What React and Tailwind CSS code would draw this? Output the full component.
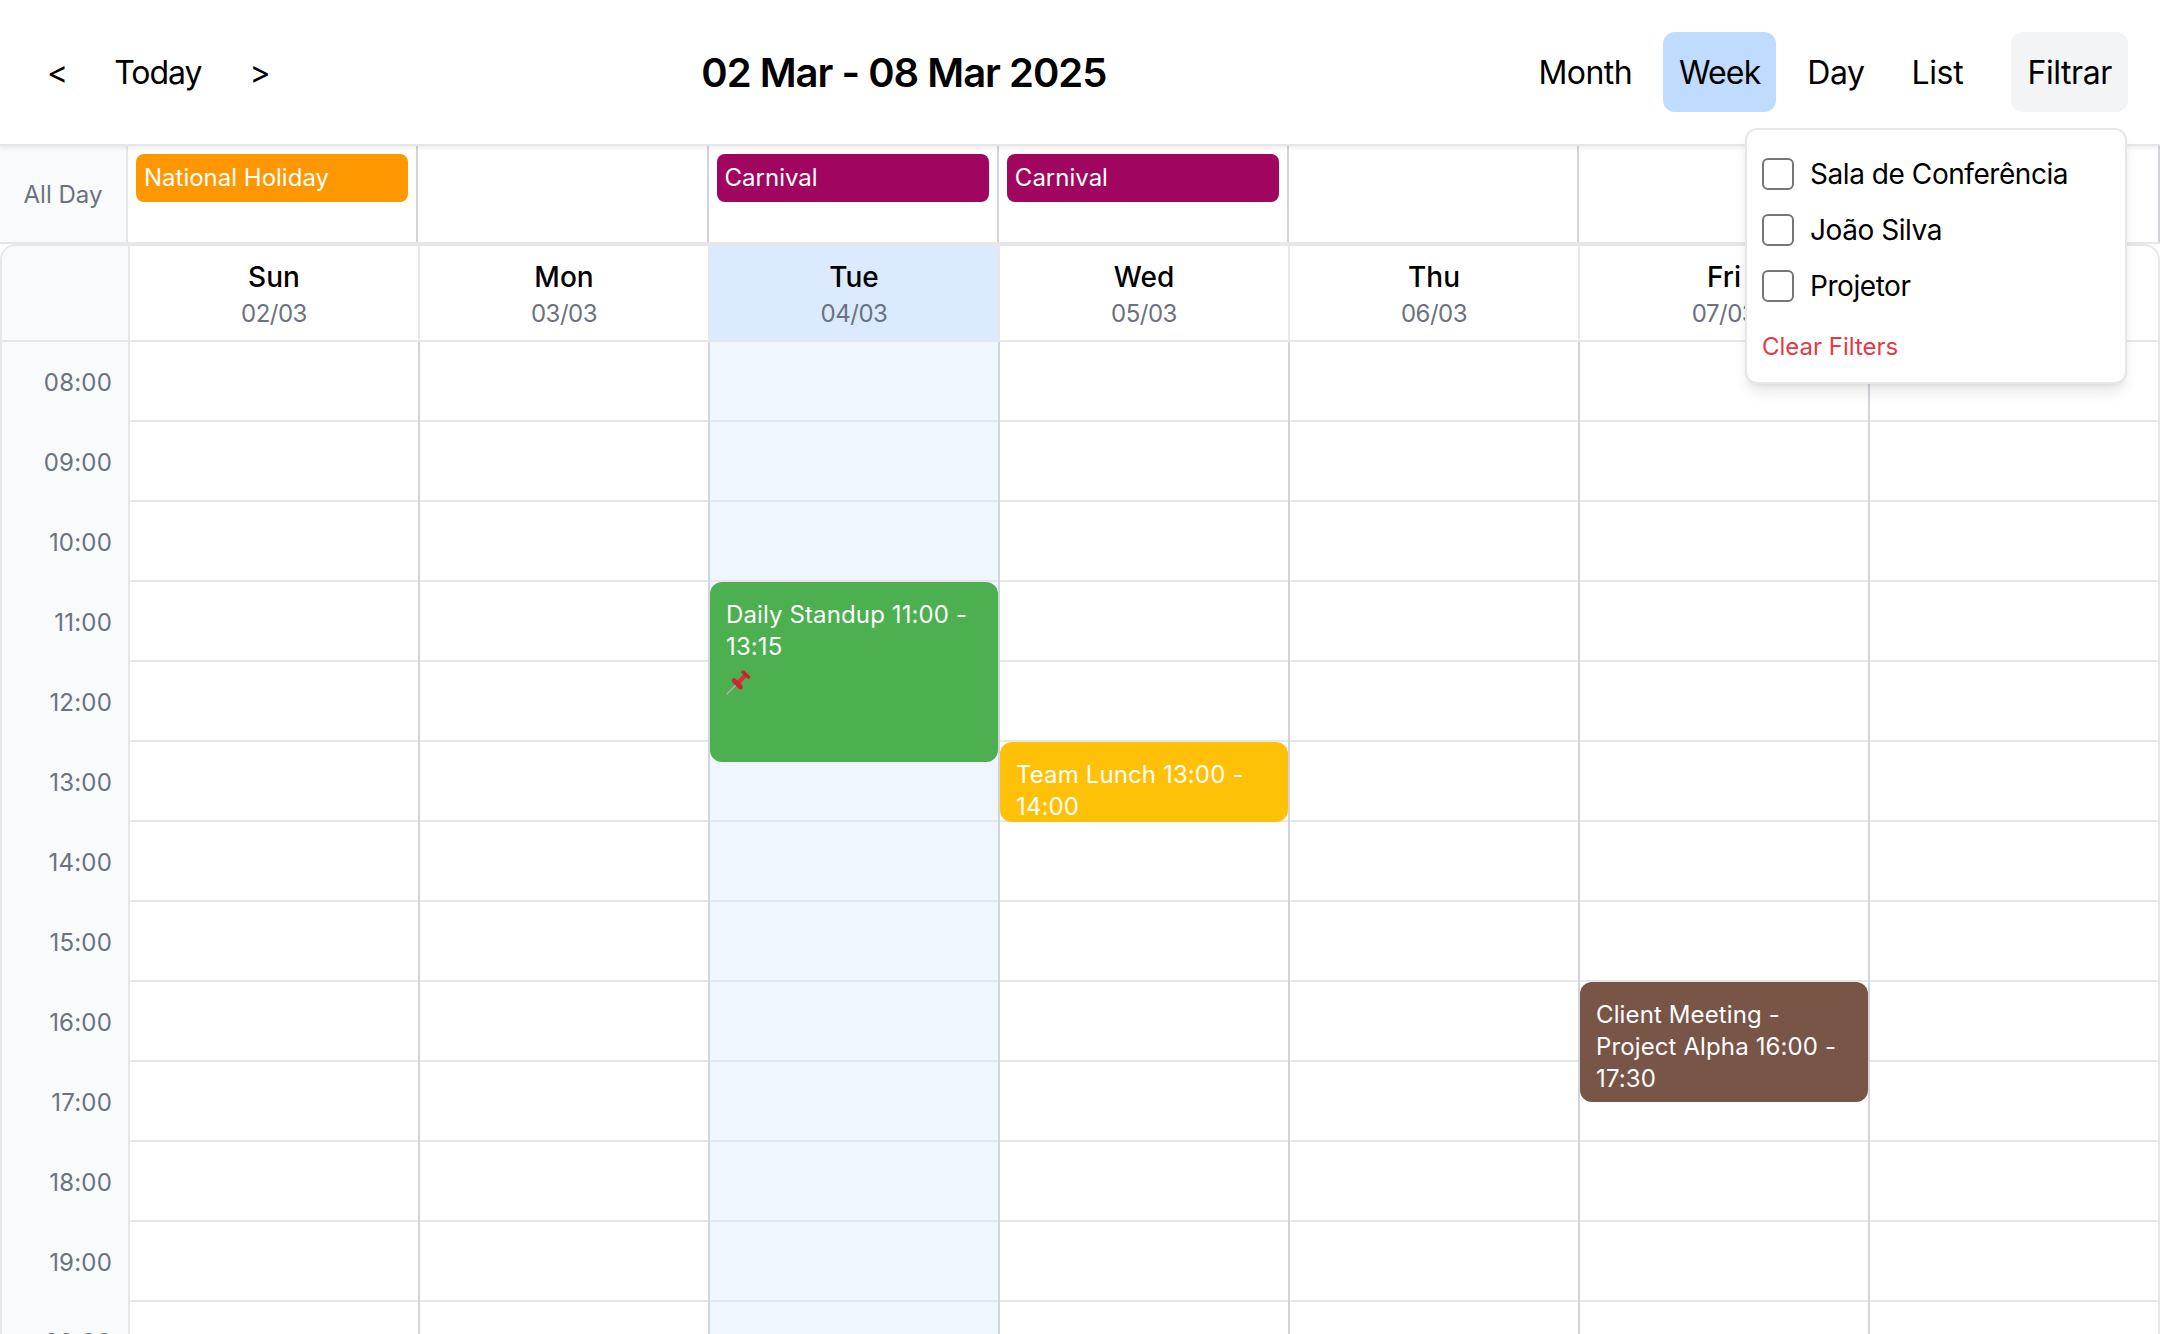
import React from "react";

const days = [
  ["Sun", "02/03"],
  ["Mon", "03/03"],
  ["Tue", "04/03"],
  ["Wed", "05/03"],
  ["Thu", "06/03"],
  ["Fri", "07/03"],
  ["Sat", "08/03"],
];
const hours = ["08:00","09:00","10:00","11:00","12:00","13:00","14:00","15:00","16:00","17:00","18:00","19:00","20:00"];

const allDay = { 0: ["National Holiday", "bg-[#ff9800]"], 2: ["Carnival", "bg-[#a0065f]"], 3: ["Carnival", "bg-[#a0065f]"] };

function Pin() {
  return (
    <svg width="24" height="24" viewBox="0 0 24 24" className="mt-[8px] block overflow-visible">
      <line x1="9.5" y1="14.5" x2="1" y2="23" stroke="#a9b8b0" strokeWidth="1.2" strokeLinecap="round" />
      <path d="M11.5 12.5 L19 4.5" stroke="#dc2e38" strokeWidth="4.2" strokeLinecap="butt" />
      <line x1="8" y1="9.5" x2="14.5" y2="16" stroke="#cf2530" strokeWidth="4.6" strokeLinecap="round" />
      <line x1="17" y1="1" x2="22.5" y2="6" stroke="#c9202c" strokeWidth="3.4" strokeLinecap="round" />
    </svg>
  );
}

function Event({ top, height, color, children }) {
  return (
    <div
      className={`absolute left-0 right-0 rounded-xl px-4 pt-[17px] text-[#fdfdfd] text-[24px] leading-8 tracking-[0.12px] overflow-hidden ${color}`}
      style={{ top, height }}
    >
      {children}
    </div>
  );
}

function NavBtn({ children, active, tracking }) {
  return (
    <button className={`px-4 pt-[17px] pb-[15px] rounded-xl text-[32px] leading-12 text-black ${tracking} ${active ? "bg-[#bfdbfe]" : ""}`}>
      {children}
    </button>
  );
}

export default function App() {
  return (
    <div className="h-[1334px] w-[2160px] overflow-hidden bg-white font-['Inter',sans-serif] text-black flex flex-col relative">
      <header className="h-[146px] shrink-0 flex items-center justify-between px-8 bg-white border-b-2 border-[#e5e7eb] shadow-[0_2px_4px_rgba(0,0,0,0.07)] relative z-10">
        <div className="flex items-center gap-4 -ml-[1px]">
          <NavBtn tracking="tracking-[-2px]">&lt;</NavBtn>
          <NavBtn tracking="tracking-[-1px]">Today</NavBtn>
          <NavBtn tracking="tracking-[-1.5px]">&gt;</NavBtn>
        </div>
        <h1 className="text-[40px] leading-[60px] font-semibold tracking-[-1px] pt-[2px]">02 Mar - 08 Mar 2025</h1>
        <div className="flex items-center gap-8">
          <div className="flex items-center gap-[15px]">
            <NavBtn tracking="tracking-[-0.55px]">Month</NavBtn>
            <NavBtn active tracking="tracking-[-0.9px]">Week</NavBtn>
            <NavBtn tracking="tracking-[-0.5px]">Day</NavBtn>
            <NavBtn tracking="tracking-[-0.3px]">List</NavBtn>
          </div>
          <div className="relative">
            <button className="px-4 pt-[17px] pb-[15px] rounded-xl text-[32px] leading-12 tracking-[-0.4px] bg-[#f3f4f6] text-black">Filtrar</button>
            <div className="absolute right-[1px] top-[96px] w-[382px] h-[256px] bg-white border-2 border-[#e5e7eb] rounded-xl shadow-[0_10px_15px_-3px_rgba(0,0,0,0.1),0_4px_6px_-4px_rgba(0,0,0,0.1)] pl-[15px] pr-4 pt-[24px] z-20">
              {["Sala de Conferência", "João Silva", "Projetor"].map((l) => (
                <label key={l} className="flex items-center gap-4 h-10 mb-4 text-[28px] leading-10 tracking-[-0.44px] whitespace-nowrap">
                  <span className="w-8 h-8 border-2 border-[#767676] rounded-md bg-white shrink-0" />
                  {l}
                </label>
              ))}
              <div className="mt-[25px] text-[24px] leading-8 text-[#e63946]">Clear Filters</div>
            </div>
          </div>
        </div>
      </header>

      <div className="flex h-[98px] shrink-0 border-b-2 border-[#e5e7eb]">
        <div className="w-[128px] shrink-0 flex items-center justify-center pt-[1px] bg-[#f9fafb] border-r-2 border-[#e5e7eb] text-[24px] text-[#6b7280]">
          All Day
        </div>
        <div className="flex-1 grid grid-cols-7">
          {days.map((d, i) => (
            <div key={d[0]} className="p-2 h-full border-r-2 border-[#d1d5db]">
              {allDay[i] && (
                <div className={`h-12 rounded-lg px-2 text-[#fdfdfd] text-[24px] leading-[47px] ${allDay[i][1]}`}>{allDay[i][0]}</div>
              )}
            </div>
          ))}
        </div>
      </div>

      <div className="flex-1 min-h-0 border-2 border-b-0 border-[#e5e7eb] rounded-t-2xl overflow-hidden">
        <div className="flex h-[96px] border-b-2 border-[#e5e7eb]">
          <div className="w-[128px] shrink-0 bg-[#f9fafb] border-r-2 border-[#e5e7eb]" />
          <div className="flex-1 grid grid-cols-[repeat(6,290px)_1fr]">
            {days.map((d, i) => (
              <div key={d[0]} className={`flex flex-col items-center pt-[13px] ${i === 2 ? "bg-[#dbeafe]" : ""} ${i < 6 ? "border-r-2 border-[#e5e7eb]" : ""}`}>
                <div className="text-[28px] leading-9 font-medium">{d[0]}</div>
                <div className="text-[24px] leading-8 tracking-[-0.5px] text-[#6b7280] mt-[3px]">{d[1]}</div>
              </div>
            ))}
          </div>
        </div>
        <div className="flex">
          <div className="w-[128px] shrink-0 bg-[#f9fafb] border-r-2 border-[#e5e7eb]">
            {hours.map((h) => (
              <div key={h} className="h-20 flex items-center justify-end pr-4 pt-[2px] text-[24px] tracking-[0.2px] text-[#6b7280]">{h}</div>
            ))}
          </div>
          <div className="flex-1 grid grid-cols-[repeat(6,290px)_1fr]">
            {days.map((d, i) => (
              <div key={d[0]} className={`relative ${i === 2 ? "bg-[#eff6ff]" : ""} ${i < 6 ? "border-r-2 border-[#d1d5db]" : ""}`}>
                {hours.map((h) => (
                  <div key={h} className="h-20 border-b-2 border-[#e5e7eb]" />
                ))}
                {i === 2 && (
                  <Event top={240} height={180} color="bg-[#4caf50]">
                    Daily Standup 11:00 - 13:15
                    <Pin />
                  </Event>
                )}
                {i === 3 && (
                  <Event top={400} height={80} color="bg-[#ffc107]">Team Lunch 13:00 - 14:00</Event>
                )}
                {i === 5 && (
                  <Event top={640} height={120} color="bg-[#795548]">Client Meeting - Project Alpha 16:00 - 17:30</Event>
                )}
              </div>
            ))}
          </div>
        </div>
      </div>
    </div>
  );
}
